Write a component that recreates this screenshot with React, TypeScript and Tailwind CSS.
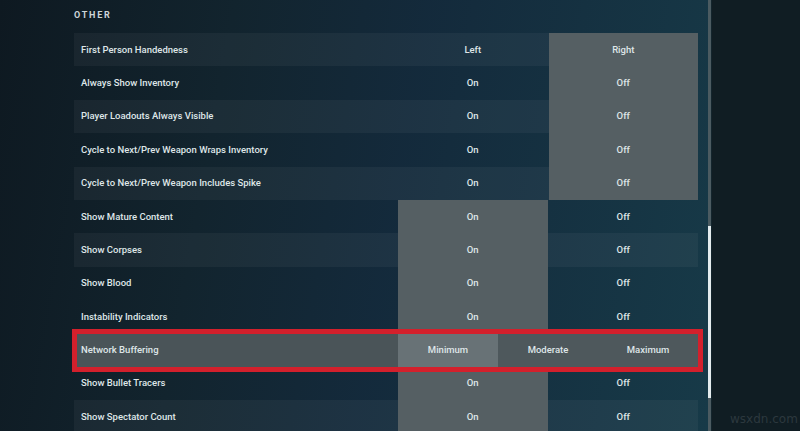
import React, { FC } from 'react'

type Row = {
  label: string
  options: string[]
  selected: number
  light?: boolean
  boxed?: boolean
}

const rows: Row[] = [
  { label: 'First Person Handedness', options: ['Left', 'Right'], selected: 1, light: true },
  { label: 'Always Show Inventory', options: ['On', 'Off'], selected: 1 },
  { label: 'Player Loadouts Always Visible', options: ['On', 'Off'], selected: 1, light: true },
  { label: 'Cycle to Next/Prev Weapon Wraps Inventory', options: ['On', 'Off'], selected: 1 },
  { label: 'Cycle to Next/Prev Weapon Includes Spike', options: ['On', 'Off'], selected: 1, light: true },
  { label: 'Show Mature Content', options: ['On', 'Off'], selected: 0 },
  { label: 'Show Corpses', options: ['On', 'Off'], selected: 0, light: true },
  { label: 'Show Blood', options: ['On', 'Off'], selected: 0 },
  { label: 'Instability Indicators', options: ['On', 'Off'], selected: 0 },
  { label: 'Network Buffering', options: ['Minimum', 'Moderate', 'Maximum'], selected: 0, boxed: true },
  { label: 'Show Bullet Tracers', options: ['On', 'Off'], selected: 0 },
  { label: 'Show Spectator Count', options: ['On', 'Off'], selected: 0, light: true },
]

const SettingRow: FC<{ row: Row }> = ({ row }) => {
  // the highlighted row gets the red annotation box drawn over it
  if (row.boxed) {
    return (
      <div className="relative flex h-[33.4px] shrink-0 bg-[#4a5458]">
        <div className="flex w-[324px] items-center pl-[7px]">{row.label}</div>
        <div className="flex flex-1">
          {row.options.map((opt, i) => (
            <div
              key={opt}
              className={
                i === row.selected
                  ? 'flex w-1/3 items-center justify-center bg-[#687276]'
                  : 'flex w-1/3 items-center justify-center bg-[#4e585c]'
              }
            >
              {opt}
            </div>
          ))}
        </div>
        <div className="pointer-events-none absolute -top-[5px] -bottom-[5px] -left-[2px] -right-[5px] border-[5px] border-[#d3202c]" />
      </div>
    )
  }

  return (
    <div className={row.light ? 'flex h-[33.4px] shrink-0 bg-white/[0.045]' : 'flex h-[33.4px] shrink-0'}>
      <div className="flex w-[324px] items-center pl-[7px]">{row.label}</div>
      <div className="flex flex-1 gap-[1px]">
        {row.options.map((opt, i) => (
          <div
            key={opt}
            className={
              i === row.selected
                ? 'flex flex-1 items-center justify-center bg-[#555f63]'
                : 'flex flex-1 items-center justify-center'
            }
          >
            {opt}
          </div>
        ))}
      </div>
    </div>
  )
}

const App: FC = () => {
  return (
    <div
      className="flex h-[431px] w-[800px] overflow-hidden text-[#dfe6e8]"
      style={{ fontFamily: 'Roboto, "Liberation Sans", sans-serif' }}
    >
      <div className="flex w-[708px] flex-col bg-[linear-gradient(100deg,#0e1921_0%,#12242e_30%,#17374522_55%,#173a48_100%)] bg-[#13283a] pl-[74px] pr-[10px]">
        <div className="flex h-[33px] shrink-0 items-center pb-[2px] text-[9px] font-bold tracking-[0.2em] text-[#cdd5d8]">
          OTHER
        </div>
        <div className="flex flex-col text-[9.5px] font-medium">
          {rows.map((row) => (
            <SettingRow key={row.label} row={row} />
          ))}
        </div>
      </div>
      <div className="flex w-[4px] flex-col bg-[#13252d]">
        <div className="h-[226px] w-[3px] bg-[#4b5b61]" />
        <div className="h-[172px] w-[3px] bg-[#e4ecee]" />
        <div className="w-[3px] flex-1 bg-[#4b5b61]" />
      </div>
      <div className="flex flex-1 flex-col justify-end bg-[#101d23] pb-[3px] pl-[18px]">
        <span className="text-[12px] text-[#2c383e]" style={{ fontFamily: '"DejaVu Sans", sans-serif' }}>
          wsxdn.com
        </span>
      </div>
    </div>
  )
}

export default App
